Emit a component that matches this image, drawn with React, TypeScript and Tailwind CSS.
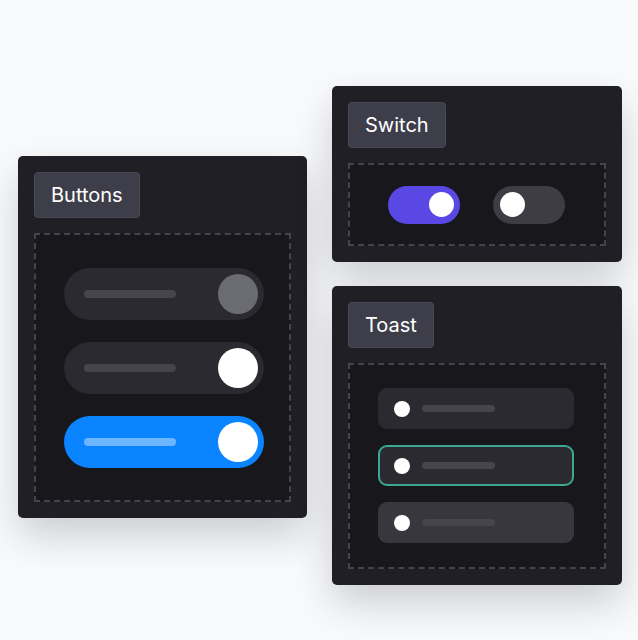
import React from 'react';

const Label = ({ children }: { children: React.ReactNode }) => (
    <div className="inline-flex h-[46px] items-center rounded-[4px] border border-[#4a4a56] bg-[#3e3e4a] px-4 text-[20px] text-white">
        {children}
    </div>
);

const Panel = ({ title, className, children }: { title: string; className: string; children: React.ReactNode }) => (
    <div className={`flex flex-col rounded-[5px] bg-[#1f1f25] p-4 shadow-[0_18px_40px_rgba(0,0,0,0.18)] ${className}`}>
        <div>
            <Label>{title}</Label>
        </div>
        <div className="mt-[15px] flex-1 border-2 border-dashed border-[#44444f] bg-[#18171c]">
            {children}
        </div>
    </div>
);

const Pill = ({ bg, bar, knob }: { bg: string; bar: string; knob: string }) => (
    <div className={`flex h-[52px] w-[200px] items-center justify-between rounded-full pl-5 pr-[6px] ${bg}`}>
        <div className={`h-2 w-[92px] rounded-full ${bar}`} />
        <div className={`h-10 w-10 rounded-full ${knob}`} />
    </div>
);

const Toast = ({ className }: { className: string }) => (
    <div className={`flex h-[41px] w-[196px] items-center gap-[12px] rounded-[9px] border-2 pl-[14px] ${className}`}>
        <div className="h-4 w-4 rounded-full bg-white" />
        <div className="h-[7px] w-[73px] rounded-full bg-[#45454d]" />
    </div>
);

export default function App() {
    return (
        <div className="flex min-h-[640px] gap-[25px] bg-[#f9fafb] pl-[18px]" style={{ fontFamily: 'Inter, "Liberation Sans", sans-serif' }}>
            <div className="pt-[156px]">
                <Panel title="Buttons" className="h-[362px] w-[289px]">
                    <div className="flex flex-col items-center gap-[22px] pt-[33px] pl-[2px]">
                        <Pill bg="bg-[#2a2a30]" bar="bg-[#45454d]" knob="bg-[#6b6b72]" />
                        <Pill bg="bg-[#2a2a30]" bar="bg-[#45454d]" knob="bg-white" />
                        <Pill bg="bg-[#0a84ff]" bar="bg-[#6cb6ff]" knob="bg-white" />
                    </div>
                </Panel>
            </div>
            <div className="flex flex-col gap-[24px] pt-[86px]">
                <Panel title="Switch" className="h-[176px] w-[290px]">
                    <div className="flex h-full items-center justify-center gap-[33px] pr-[1px]">
                        <div className="flex h-[38px] w-[72px] items-center justify-end rounded-full bg-[#5a48e4] pr-[6px]">
                            <div className="h-[25px] w-[25px] rounded-full bg-white" />
                        </div>
                        <div className="flex h-[38px] w-[72px] items-center rounded-full bg-[#3e3d44] pl-[7px]">
                            <div className="h-[25px] w-[25px] rounded-full bg-white" />
                        </div>
                    </div>
                </Panel>
                <Panel title="Toast" className="h-[299px] w-[290px]">
                    <div className="flex flex-col items-center gap-[16px] pt-[23px] pr-[2px]">
                        <Toast className="border-transparent bg-[#2a2a30]" />
                        <Toast className="border-[#3aa893] bg-[#2a2a30]" />
                        <Toast className="border-transparent bg-[#38373e]" />
                    </div>
                </Panel>
            </div>
        </div>
    );
}
